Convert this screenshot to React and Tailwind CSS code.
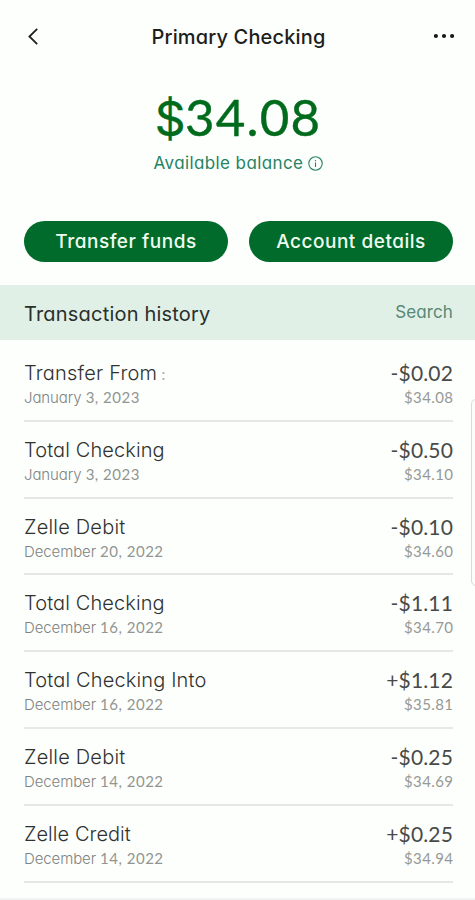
const ui = "font-['Inter',sans-serif] [font-feature-settings:'cv11']";
const num = "font-['Lato',sans-serif]";

const rows = [
  ['Transfer From', 'January', '3, 2023', '-$0.02', '$34.08', 'tracking-[0.2px]'],
  ['Total Checking', 'January', '3, 2023', '-$0.50', '$34.10', 'tracking-[0.1px]'],
  ['Zelle Debit', 'December', '20, 2022', '-$0.10', '$34.60', 'tracking-[0.2px]'],
  ['Total Checking', 'December', '16, 2022', '-$1.11', '$34.70', 'tracking-[0.1px]'],
  ['Total Checking Into', 'December', '16, 2022', '+$1.12', '$35.81', 'tracking-[0.15px]'],
  ['Zelle Debit', 'December', '14, 2022', '-$0.25', '$34.69', 'tracking-[0.2px]'],
  ['Zelle Credit', 'December', '14, 2022', '+$0.25', '$34.94', 'tracking-[0.05px]'],
];

function Row({ row, first }) {
  const [name, month, day, amount, balance, track] = row;
  return (
    <li className="flex h-[76.83px] justify-between border-b-2 border-[#e5e8e6] pt-[15px] whitespace-nowrap">
      <div>
        <div className={`h-[26px] text-[20px] leading-[26px] font-light text-[#303230] ${track}`}>
          {name}
          {first && <span className="ml-1 text-[15px] leading-none font-normal text-[#a9aca9]">:</span>}
        </div>
        <div className="text-[15px] leading-[22px] font-light tracking-[-0.1px] text-[#808380]">
          {month} <span className={`${num} font-normal tracking-[0.5px] text-[#929592]`}>{day}</span>
        </div>
      </div>
      <div className={`${num} text-right`}>
        <div className="text-[21px] leading-[26px] tracking-[0.15px] text-[#484a48]">{amount}</div>
        <div className="mr-[-0.4px] text-[15px] leading-[22px] tracking-[0.4px] text-[#969996]">{balance}</div>
      </div>
    </li>
  );
}

export default function App() {
  return (
    <main className={`relative flex h-[900px] w-[475px] flex-col overflow-hidden bg-[#fdfffd] ${ui}`}>
      <header className="flex h-[74px] items-center justify-between pr-[20px] pl-[28px]">
        <svg className="mb-[2px] h-[17px] w-[10px]" viewBox="0 0 10 17" fill="none" stroke="#202020" strokeWidth="1.8">
          <path d="M9.2 .8 1.4 8.5l7.8 7.7" />
        </svg>
        <h1 className="ml-[6px] text-[20px] leading-[26px] font-medium tracking-[0.15px] text-[#1c1e1c]">Primary Checking</h1>
        <svg className="mb-[2px] h-[6px] w-[22px]" viewBox="0 0 22 6" fill="#181818">
          <circle cx="2.9" cy="3" r="2.1" />
          <circle cx="11" cy="3" r="2.1" />
          <circle cx="19.1" cy="3" r="2.1" />
        </svg>
      </header>

      <section className="flex h-[147px] flex-col items-center pt-[13px]">
        <div className={`${num} ml-[1px] text-[51px] leading-[60px] tracking-[1.2px] text-[#006b1c] [-webkit-text-stroke:0.4px_#006b1c]`}>
          <span className="font-['Inter',sans-serif] text-[48px] leading-none tracking-[-0.5px]">$</span>34.08
        </div>
        <div className="mt-[4px] ml-[2px] flex items-center gap-[5px] text-[17px] leading-[24px] tracking-[0.4px] text-[#258365]">
          Available balance
          <svg className="h-[15px] w-[15px]" viewBox="0 0 15 15" fill="none" stroke="currentColor" strokeWidth="1.1">
            <circle cx="7.5" cy="7.5" r="6.7" />
            <path d="M7.5 6.6v4.3M7.5 4v1.3" />
          </svg>
        </div>
      </section>

      <div className="flex gap-[21px] pr-[22px] pl-[24px] text-[19px] font-medium tracking-[0.52px] text-[#effbef]">
        <button className="h-[41px] flex-1 rounded-full bg-[#006b2a] pt-[2px]">Transfer funds</button>
        <button className="h-[41px] flex-1 rounded-full bg-[#006b2a] pt-[2px]">Account details</button>
      </div>

      <div className="mt-[23px] flex h-[55px] shrink-0 items-center justify-between bg-[#e1f0e7] pr-[22px] pl-[24px]">
        <h2 className="pt-[2px] text-[20px] font-normal tracking-[0.2px] text-[#292f2b]">Transaction history</h2>
        <span className="text-[17px] tracking-[0.1px] text-[#568875]">Search</span>
      </div>

      <ul className="mt-[5px] flex flex-col pr-[22px] pl-[24px]">
        {rows.map((row, i) => (
          <Row key={i} row={row} first={i === 0} />
        ))}
      </ul>

      <div className="mt-auto h-[2px] shrink-0 bg-[#eff3f1]" />
      <div className="absolute top-[399px] right-[-6px] h-[187px] w-[10px] rounded-[5px] border border-[#d7dad7] bg-[#fbfdfb]" />
    </main>
  );
}
